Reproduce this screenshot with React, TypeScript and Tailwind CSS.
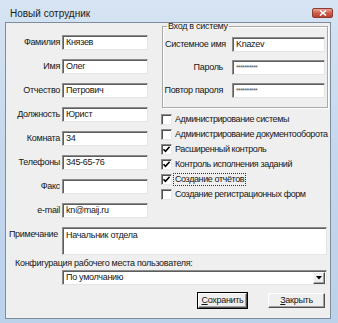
import React from "react";

const sunken =
  "bg-white border border-t-[#8c8c8c] border-l-[#8c8c8c] border-r-[#e4e4e4] border-b-[#e4e4e4] shadow-[inset_1px_1px_0_#5e5e5e]";
const raised =
  "bg-[#efefef] border border-t-white border-l-white border-r-[#505050] border-b-[#505050] shadow-[inset_-1px_-1px_0_#a0a0a0]";

function Input({ value, className = "" }: { value?: string; className?: string }) {
  return (
    <div className={`${sunken} h-[15px] pl-[3px] flex items-center whitespace-nowrap overflow-hidden ${className}`}>
      {value}
    </div>
  );
}

function Password({ className = "" }: { className?: string }) {
  return (
    <div className={`${sunken} h-[15px] pl-[3px] flex items-center text-[7px] tracking-[-0.6px] text-[#555] ${className}`}>
      **********
    </div>
  );
}

function Check({ label, checked, focus }: { label: string; checked?: boolean; focus?: boolean }) {
  return (
    <div className="h-[15px] flex items-center ml-[1px]">
      <div className="shrink-0 w-[11px] h-[11px] bg-white border border-t-[#8c8c8c] border-l-[#8c8c8c] border-r-[#e8e8e8] border-b-[#e8e8e8] shadow-[inset_1px_1px_0_#505050] flex items-center justify-center">
        {checked && (
          <svg width="9" height="9" viewBox="0 0 9 9">
            <path d="M1.5 4.2 L3.5 6.3 L7.6 1.8" stroke="#000" strokeWidth="1.6" fill="none" />
          </svg>
        )}
      </div>
      <span
        className={`ml-[1px] px-[1px] leading-[11px] tracking-[-0.4px] whitespace-nowrap border border-dotted ${
          focus ? "border-[#333]" : "border-transparent"
        }`}
      >
        {label}
      </span>
    </div>
  );
}

const leftFields: [string, string][] = [
  ["Фамилия", "Князев"],
  ["Имя", "Олег"],
  ["Отчество", "Петрович"],
  ["Должность", "Юрист"],
  ["Комната", "34"],
  ["Телефоны", "345-65-76"],
  ["Факс", ""],
  ["e-mail", "kn@maij.ru"],
];

export default function App() {
  return (
    <div className="w-[338px] h-[323px] bg-gradient-to-b from-[#d6e4f3] via-[#c3d7ed] to-[#bcd2ea] flex flex-col font-['Liberation_Sans',Arial,sans-serif] text-black overflow-hidden">
      {/* Title bar */}
      <div className="h-[22px] shrink-0 flex items-start justify-between pl-[10px] pr-[5px]">
        <span className="mt-[8px] text-[10px] leading-[12px] text-[#1b1b1b]">Новый сотрудник</span>
        <div className="mt-[8px] w-[21px] h-[10px] rounded-[2px] border border-[#8e3b31] bg-gradient-to-b from-[#e8a597] via-[#cf5c4c] to-[#b8412f] flex items-center justify-center">
          <svg width="8" height="6" viewBox="0 0 8 6">
            <path d="M1 0.5 L7 5.5 M7 0.5 L1 5.5" stroke="#fff" strokeWidth="1.6" />
          </svg>
        </div>
      </div>

      {/* Body */}
      <div className="ml-[5px] w-[326px] h-[297px] shrink-0 border border-[#7e8d9e] bg-[#efefef] flex flex-col text-[9px] leading-[11px] tracking-[-0.3px] text-[#161616]">
        <div className="flex">
          {/* Left fields */}
          <div className="mt-[12px] grid grid-cols-[54px_86px] gap-x-[2px] gap-y-[9px] items-center">
            {leftFields.map(([label, value]) => (
              <React.Fragment key={label}>
                <span className="text-right whitespace-nowrap">{label}</span>
                <Input value={value} />
              </React.Fragment>
            ))}
          </div>

          {/* Right column */}
          <div className="ml-[12px] w-[170px] flex flex-col">
            <fieldset className="ml-[2px] w-[166px] border border-[#a9a9a9] shadow-[1px_1px_0_#ffffff,inset_1px_1px_0_#ffffff] pt-[7px] pb-[9px] flex flex-col gap-[8px]">
              <legend className="ml-[4px] px-[1px] leading-[7px] whitespace-nowrap">Вход в систему</legend>
              <div className="flex items-center h-[15px]">
                <span className="w-[69px] pl-[2px] whitespace-nowrap">Системное имя</span>
                <Input value="Knazev" className="w-[93px]" />
              </div>
              <div className="flex items-center h-[15px]">
                <span className="w-[69px] pr-[9px] text-right whitespace-nowrap">Пароль</span>
                <Password className="w-[93px]" />
              </div>
              <div className="flex items-center h-[15px]">
                <span className="w-[69px] pr-[9px] text-right whitespace-nowrap">Повтор пароля</span>
                <Password className="w-[93px]" />
              </div>
            </fieldset>

            <div className="mt-[4px] flex flex-col">
              <Check label="Администрирование системы" />
              <Check label="Администрирование документооборота" />
              <Check label="Расширенный контроль" checked />
              <Check label="Контроль исполнения заданий" checked />
              <Check label="Создание отчётов" checked focus />
              <Check label="Создание регистрационных форм" />
            </div>
          </div>
        </div>

        {/* Note */}
        <div className="mt-[9px] flex items-start">
          <span className="w-[54px] pr-[2px] pt-[2px] text-right whitespace-nowrap">Примечание</span>
          <div className={`${sunken} ml-[2px] w-[265px] h-[28px] pl-[3px] pt-[2px]`}>Начальник отдела</div>
        </div>

        {/* Config */}
        <div className="mt-[3px] pl-[9px] whitespace-nowrap">Конфигурация рабочего места пользователя:</div>
        <div className={`${sunken} mt-[1px] ml-[56px] w-[265px] h-[15px] flex items-center justify-between pl-[3px] pr-[1px]`}>
          <span>По умолчанию</span>
          <div className={`${raised} w-[12px] h-[12px] flex items-center justify-center`}>
            <svg width="6" height="4" viewBox="0 0 6 4">
              <path d="M0 0 H6 L3 3.5 Z" fill="#000" />
            </svg>
          </div>
        </div>

        {/* Buttons */}
        <div className="mt-[8px] flex">
          <button className={`${raised} ml-[192px] w-[49px] h-[15px] outline outline-1 outline-black leading-[11px]`}>
            <span className="underline">С</span>охранить
          </button>
          <button className={`${raised} ml-[21px] w-[57px] h-[15px] leading-[11px]`}>
            <span className="underline">З</span>акрыть
          </button>
        </div>
      </div>
    </div>
  );
}
